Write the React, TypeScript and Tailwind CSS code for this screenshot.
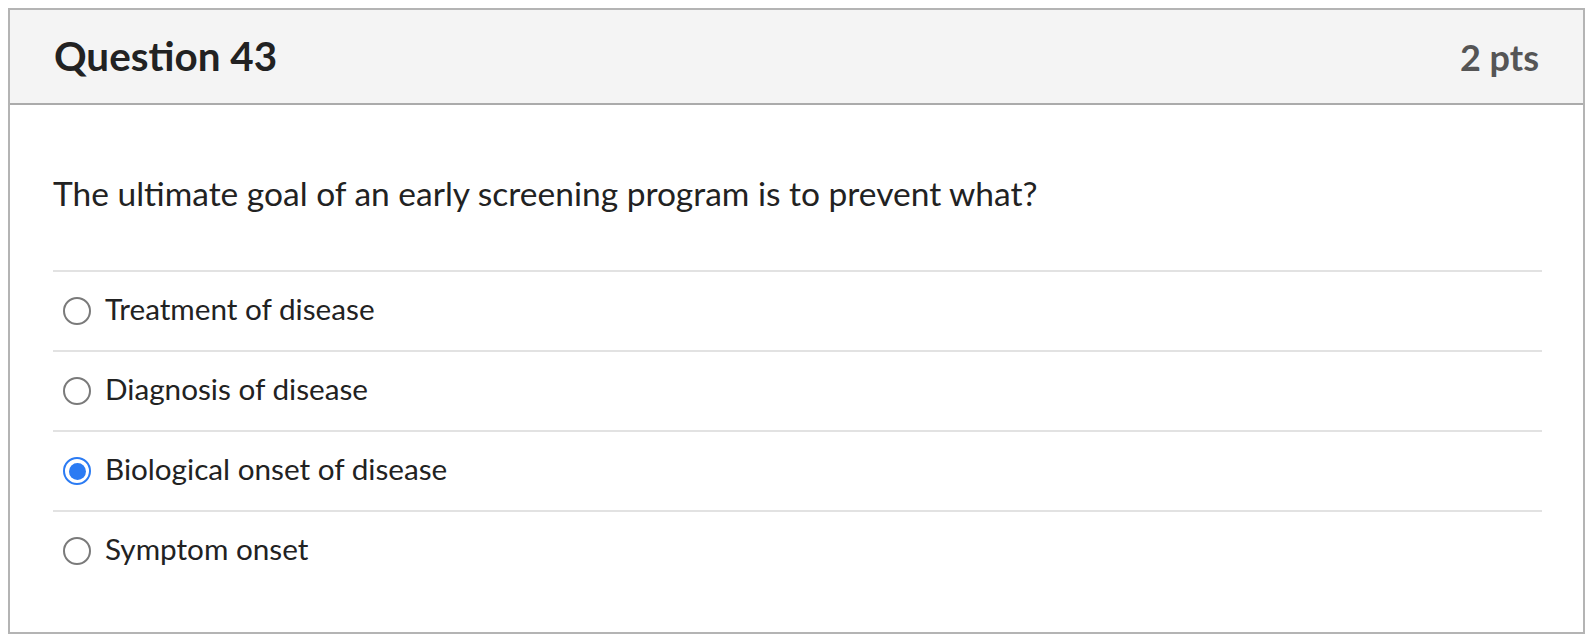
import { useState } from 'react';

const answers = [
  'Treatment of disease',
  'Diagnosis of disease',
  'Biological onset of disease',
  'Symptom onset',
];

function Radio({ checked }: { checked: boolean }) {
  return checked ? (
    <span className="flex h-[28px] w-[28px] shrink-0 items-center justify-center rounded-full border-2 border-[#2b7bf3] bg-white">
      <span className="h-[17px] w-[17px] rounded-full bg-[#2b7bf3]" />
    </span>
  ) : (
    <span className="h-[28px] w-[28px] shrink-0 rounded-full border-2 border-[#7a7a7a] bg-white" />
  );
}

export default function App() {
  const [selected, setSelected] = useState(2);

  return (
    <div className="min-h-[638px] bg-white pl-[8px] pt-[8px] font-['Lato',sans-serif]">
      <div className="w-[1577px] border-2 border-[#b4b4b4] bg-white">
        <div className="flex h-[95px] items-center justify-between border-b-2 border-[#ababab] bg-[#f4f4f4] pl-[44px] pr-[44px]">
          <h2 className="text-[40.4px] font-bold leading-none text-[#222]">Question 43</h2>
          <span className="text-[36px] font-bold leading-none text-[#555]">2 pts</span>
        </div>

        <div className="pl-[43px] pr-[41px] pt-[60px] pb-[42px]">
          <p className="text-[33.5px] leading-[56px] text-[#222]">
            The ultimate goal of an early screening program is to prevent what?
          </p>
          <div className="mt-[49px]">
            {answers.map((a, i) => (
              <label
                key={a}
                onClick={() => setSelected(i)}
                className="flex h-[80px] cursor-pointer items-center gap-[14px] border-t-2 border-[#e2e2e2] pl-[10px]"
              >
                <Radio checked={selected === i} />
                <span className="-mt-[3px] text-[29.7px] text-[#222]">{a}</span>
              </label>
            ))}
          </div>
        </div>
      </div>
    </div>
  );
}
